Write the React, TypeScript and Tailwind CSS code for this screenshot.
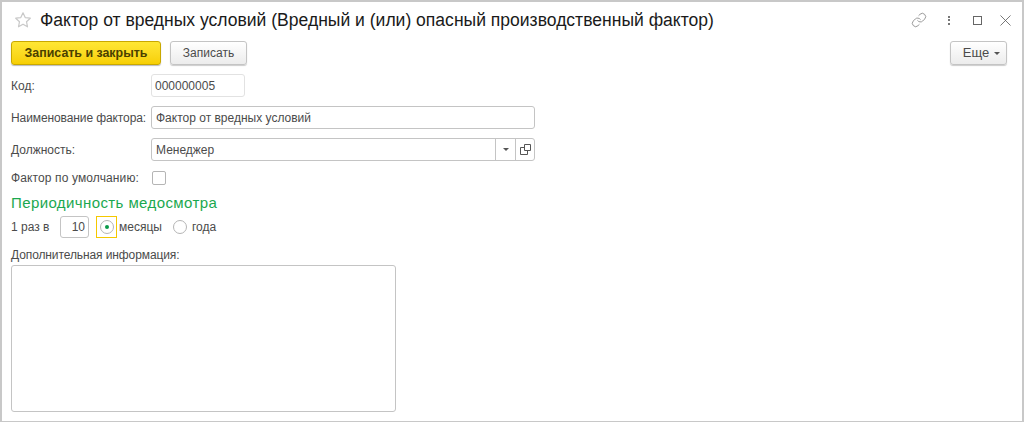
import { Link, X } from 'lucide-react';

const fieldBorder = 'rounded-[3px] border border-[#c4c4c4] bg-white';

function Caret() {
  return <span className="inline-block border-x-[3px] border-t-[3px] border-x-transparent border-t-[#555]" />;
}

export default function App() {
  return (
    <div className="flex h-[422px] w-[1024px] flex-col overflow-hidden border-x-2 border-t-2 border-b border-x-[#c8c8c8] border-t-[#c8c8c8] border-b-[#c8c8c8] bg-white pl-[9px] pr-[15px] text-[12px] text-[#4b4b4b] font-['Liberation_Sans',sans-serif]">
      {/* header */}
      <div className="flex h-[39px] flex-none items-center pb-[3px]">
        <svg width="18" height="18" viewBox="0 0 18 18" className="ml-[3px] flex-none">
          <path d="M9 1.8l2.2 4.8 5.1.6-3.8 3.5 1 5.1L9 13.2l-4.5 2.6 1-5.1L1.700 7.200l5.100-.6z" fill="none" stroke="#c9c9c9" strokeWidth="1.200" strokeLinejoin="round" />
        </svg>
        <div className="ml-[8px] text-[17.55px] text-[#1a1a1a]">Фактор от вредных условий (Вредный и (или) опасный производственный фактор)</div>
        <div className="ml-auto mr-[-8px] flex items-center text-[#8a8a8a]">
          <Link size={16} strokeWidth={1.300} />
          <span className="ml-[21px] flex flex-col gap-[1.500px]">
            <span className="h-[2px] w-[2px] bg-[#777]" />
            <span className="h-[2px] w-[2px] bg-[#777]" />
            <span className="h-[2px] w-[2px] bg-[#777]" />
          </span>
          <span className="ml-[23px] h-[9px] w-[9px] border-[1.500px] border-[#666]" />
          <X size={19} strokeWidth={1} className="ml-[14px] text-[#555]" />
        </div>
      </div>

      {/* command bar */}
      <div className="flex h-[24px] flex-none items-stretch">
        <button className="flex w-[150px] items-center justify-center rounded-[3px] border border-[#c9a800] bg-gradient-to-b from-[#ffe733] to-[#f7cf00] text-[12.4px] font-bold text-[#4a4000] shadow-[0_1px_1px_#bbb]">Записать и закрыть</button>
        <button className="ml-[9px] flex w-[77px] items-center justify-center rounded-[3px] border border-[#c4c4c4] bg-gradient-to-b from-white to-[#ececec] text-[#4b4b4b] shadow-[0_1px_1px_#ccc]">Записать</button>
        <button className="ml-auto flex w-[57px] items-center justify-center gap-[5px] rounded-[3px] border border-[#c4c4c4] bg-gradient-to-b from-white to-[#ececec] pl-[6px] text-[13px] text-[#4b4b4b] shadow-[0_1px_1px_#ccc]">Еще <Caret /></button>
      </div>

      {/* form */}
      <div className="mt-[9px] flex flex-col">
        <div className="flex h-[23px] items-center">
          <span className="w-[140px]">Код:</span>
          <div className="flex h-full w-[94px] items-center rounded-[3px] border border-[#e2e2e2] bg-white pl-[3px]">000000005</div>
        </div>
        <div className="mt-[9px] flex h-[23px] items-center">
          <span className="w-[140px] tracking-[-0.1px]">Наименование фактора:</span>
          <div className={`${fieldBorder} flex h-full w-[384px] items-center pl-[4px]`}>Фактор от вредных условий</div>
        </div>
        <div className="mt-[9px] flex h-[23px] items-center">
          <span className="w-[140px]">Должность:</span>
          <div className={`${fieldBorder} flex h-full w-[384px] items-center pl-[4px]`}>
            <span className="flex-1">Менеджер</span>
            <span className="flex h-full w-[20px] items-center justify-center border-l border-[#c4c4c4]"><Caret /></span>
            <span className="flex h-full w-[19px] items-center justify-center border-l border-[#c4c4c4]">
              <svg width="11" height="11" viewBox="0 0 11 11" fill="none" stroke="#555">
                <path d="M4.500.5h6v6h-6z" />
                <path d="M4 3.500H.5v7h7V7" />
              </svg>
            </span>
          </div>
        </div>
        <div className="mt-[9px] flex h-[15px] items-center">
          <span className="w-[141px] tracking-[0.12px]">Фактор по умолчанию:</span>
          <span className="h-[14px] w-[14px] rounded-[2px] border border-[#b5b5b5] bg-white" />
        </div>
        <div className="mt-[10px] text-[15px] leading-[16px] tracking-[0.4px] text-[#1ba84f]">Периодичность медосмотра</div>
        <div className="mt-[5px] flex h-[22px] items-center">
          <span className="w-[49px]">1 раз в</span>
          <div className={`${fieldBorder} flex h-full w-[29px] items-center justify-end pr-[3px]`}>10</div>
          <div className="ml-[7px] flex h-[22px] w-[21px] items-center justify-center border border-[#f5c800]">
            <span className="flex h-[14px] w-[14px] items-center justify-center rounded-full border border-[#b5b5b5]">
              <span className="h-[4px] w-[4px] rounded-full bg-[#0a9a4a]" />
            </span>
          </div>
          <span className="ml-[2px]">месяцы</span>
          <span className="ml-[11px] h-[14px] w-[14px] rounded-full border border-[#b5b5b5]" />
          <span className="ml-[5px]">года</span>
        </div>
        <div className="mt-[10px] leading-[14px] tracking-[-0.1px]">Дополнительная информация:</div>
        <div className={`${fieldBorder} mt-[3px] h-[147px] w-[385px]`} />
      </div>
    </div>
  );
}
